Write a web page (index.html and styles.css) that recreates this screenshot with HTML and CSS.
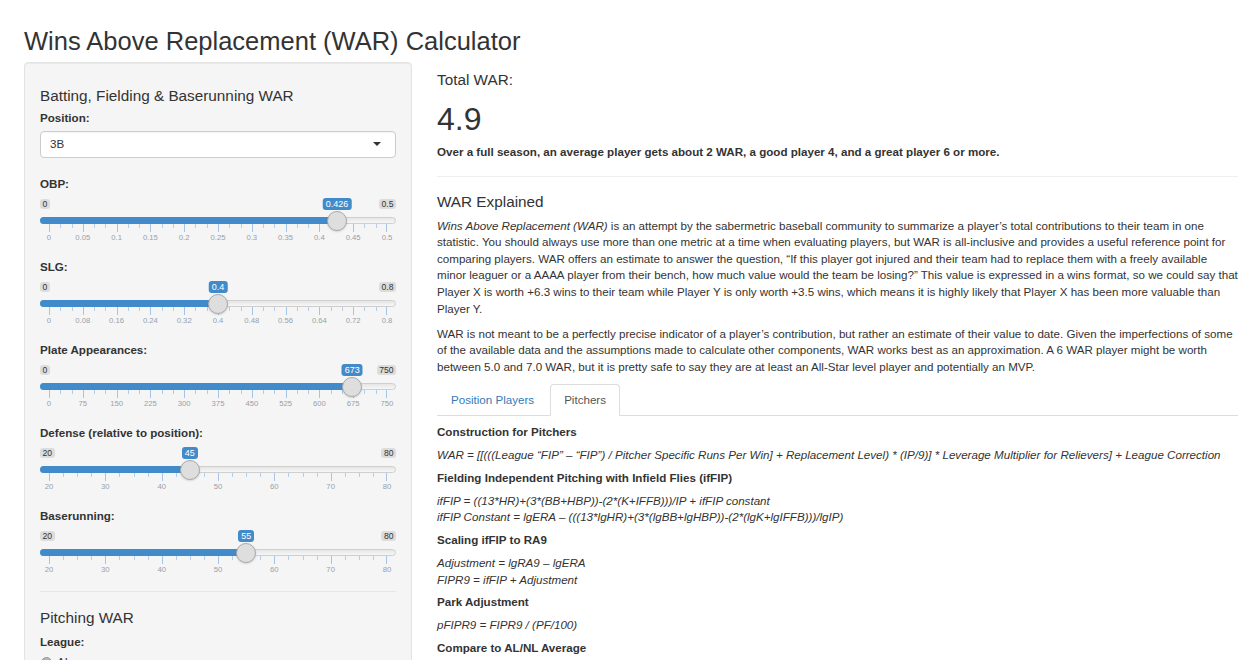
FILE: index.html
```html
<!DOCTYPE html>
<html lang="en">
<head>
<meta charset="utf-8">
<title>Wins Above Replacement (WAR) Calculator</title>
<link rel="stylesheet" href="styles.css">
</head>
<body>
<div class="page">
  <h2 class="title">Wins Above Replacement (WAR) Calculator</h2>
  <div class="layout">
    <div class="sidebar">
      <div class="well">
        <h4 class="sub">Batting, Fielding &amp; Baserunning WAR</h4>
        <div class="form-group select-group">
          <label class="control-label">Position:</label>
          <div class="select"><span>3B</span><span class="caret"></span></div>
        </div>

        <div class="form-group slider-group">
          <label class="control-label">OBP:</label>
          <div class="irs" style="--p: 0.852">
            <div class="irs-labels"><span class="irs-min">0</span><span class="irs-max">0.5</span><span class="irs-single">0.426</span></div>
            <div class="irs-line"><div class="irs-bar"></div><span class="irs-handle"></span></div>
            <div class="irs-grid ten"></div>
            <div class="irs-grid-text"><span>0</span><span>0.05</span><span>0.1</span><span>0.15</span><span>0.2</span><span>0.25</span><span>0.3</span><span>0.35</span><span>0.4</span><span>0.45</span><span>0.5</span></div>
          </div>
        </div>

        <div class="form-group slider-group">
          <label class="control-label">SLG:</label>
          <div class="irs" style="--p: 0.5">
            <div class="irs-labels"><span class="irs-min">0</span><span class="irs-max">0.8</span><span class="irs-single">0.4</span></div>
            <div class="irs-line"><div class="irs-bar"></div><span class="irs-handle"></span></div>
            <div class="irs-grid ten"></div>
            <div class="irs-grid-text"><span>0</span><span>0.08</span><span>0.16</span><span>0.24</span><span>0.32</span><span>0.4</span><span>0.48</span><span>0.56</span><span>0.64</span><span>0.72</span><span>0.8</span></div>
          </div>
        </div>

        <div class="form-group slider-group">
          <label class="control-label">Plate Appearances:</label>
          <div class="irs" style="--p: 0.8973">
            <div class="irs-labels"><span class="irs-min">0</span><span class="irs-max">750</span><span class="irs-single">673</span></div>
            <div class="irs-line"><div class="irs-bar"></div><span class="irs-handle"></span></div>
            <div class="irs-grid ten"></div>
            <div class="irs-grid-text"><span>0</span><span>75</span><span>150</span><span>225</span><span>300</span><span>375</span><span>450</span><span>525</span><span>600</span><span>675</span><span>750</span></div>
          </div>
        </div>

        <div class="form-group slider-group">
          <label class="control-label">Defense (relative to position):</label>
          <div class="irs" style="--p: 0.41667">
            <div class="irs-labels"><span class="irs-min">20</span><span class="irs-max">80</span><span class="irs-single">45</span></div>
            <div class="irs-line"><div class="irs-bar"></div><span class="irs-handle"></span></div>
            <div class="irs-grid six"></div>
            <div class="irs-grid-text"><span>20</span><span>30</span><span>40</span><span>50</span><span>60</span><span>70</span><span>80</span></div>
          </div>
        </div>

        <div class="form-group slider-group">
          <label class="control-label">Baserunning:</label>
          <div class="irs" style="--p: 0.58333">
            <div class="irs-labels"><span class="irs-min">20</span><span class="irs-max">80</span><span class="irs-single">55</span></div>
            <div class="irs-line"><div class="irs-bar"></div><span class="irs-handle"></span></div>
            <div class="irs-grid six"></div>
            <div class="irs-grid-text"><span>20</span><span>30</span><span>40</span><span>50</span><span>60</span><span>70</span><span>80</span></div>
          </div>
        </div>

        <hr class="well-hr">
        <h4 class="sub pitching">Pitching WAR</h4>
        <div class="form-group">
          <label class="control-label">League:</label>
          <div class="radio"><span class="radio-dot"></span><span>AL</span></div>
          <div class="radio"><span class="radio-dot"></span><span>NL</span></div>
        </div>
      </div>
    </div>

    <div class="main">
      <h4 class="total-label">Total WAR:</h4>
      <h1 class="total-value">4.9</h1>
      <p class="note"><strong>Over a full season, an average player gets about 2 WAR, a good player 4, and a great player 6 or more.</strong></p>
      <hr class="main-hr">
      <h4 class="explained">WAR Explained</h4>
      <p class="para"><em>Wins Above Replacement (WAR)</em> is an attempt by the sabermetric baseball community to summarize a player’s total contributions to their team in one statistic. You should always use more than one metric at a time when evaluating players, but WAR is all-inclusive and provides a useful reference point for comparing players. WAR offers an estimate to answer the question, “If this player got injured and their team had to replace them with a freely available minor leaguer or a AAAA player from their bench, how much value would the team be losing?” This value is expressed in a wins format, so we could say that Player X is worth +6.3 wins to their team while Player Y is only worth +3.5 wins, which means it is highly likely that Player X has been more valuable than Player Y.</p>
      <p class="para last">WAR is not meant to be a perfectly precise indicator of a player’s contribution, but rather an estimate of their value to date. Given the imperfections of some of the available data and the assumptions made to calculate other components, WAR works best as an approximation. A 6 WAR player might be worth between 5.0 and 7.0 WAR, but it is pretty safe to say they are at least an All-Star level player and potentially an MVP.</p>

      <div class="tabs">
        <span class="tab">Position Players</span>
        <span class="tab active">Pitchers</span>
      </div>
      <div class="tab-content">
        <p class="tp"><strong>Construction for Pitchers</strong></p>
        <p class="tp"><em>WAR = [[(((League “FIP” – “FIP”) / Pitcher Specific Runs Per Win] + Replacement Level) * (IP/9)] * Leverage Multiplier for Relievers] + League Correction</em></p>
        <p class="tp"><strong>Fielding Independent Pitching with Infield Flies (ifFIP)</strong></p>
        <p class="tp"><em>ifFIP = ((13*HR)+(3*(BB+HBP))-(2*(K+IFFB)))/IP + ifFIP constant<br>ifFIP Constant = lgERA – (((13*lgHR)+(3*(lgBB+lgHBP))-(2*(lgK+lgIFFB)))/lgIP)</em></p>
        <p class="tp"><strong>Scaling ifFIP to RA9</strong></p>
        <p class="tp"><em>Adjustment = lgRA9 – lgERA<br>FIPR9 = ifFIP + Adjustment</em></p>
        <p class="tp"><strong>Park Adjustment</strong></p>
        <p class="tp"><em>pFIPR9 = FIPR9 / (PF/100)</em></p>
        <p class="tp"><strong>Compare to AL/NL Average</strong></p>
      </div>
    </div>
  </div>
</div>
</body>
</html>
```
FILE: styles.css
```css
* { box-sizing: border-box; }
html, body { margin: 0; padding: 0; }
body {
  width: 1238px;
  height: 660px;
  overflow: hidden;
  background: #fff;
  color: #333;
  font-family: "Liberation Sans", Arial, Helvetica, sans-serif;
  font-size: 11.6px;
  line-height: 16.6px;
}
.page { padding-left: 24px; }
.title {
  margin: 0;
  padding-top: 27px;
  margin-bottom: 7px;
  font-size: 25.5px;
  line-height: 28px;
  font-weight: 400;
  color: #333;
}
.layout { display: flex; gap: 25px; align-items: flex-start; }
.sidebar { width: 388px; flex: none; }
.main { width: 801px; flex: none; }

.well {
  background: #f5f5f5;
  border: 1px solid #e3e3e3;
  border-radius: 4px;
  box-shadow: inset 0 1px 1px rgba(0,0,0,0.05);
  padding: 15px 15px 20px;
  min-height: 640px;
}
.sub {
  margin: 9px 0 6px;
  font-size: 15.3px;
  line-height: 17px;
  font-weight: 400;
}
.control-label {
  display: block;
  font-weight: 700;
  margin-bottom: 4px;
}
.form-group { margin-bottom: 16px; }
.select-group { margin-bottom: 18px; }
.select {
  height: 27px;
  background: #fff;
  border: 1px solid #ccc;
  border-radius: 4px;
  padding: 0 14px 0 9px;
  display: flex;
  align-items: center;
  justify-content: space-between;
  box-shadow: inset 0 1px 1px rgba(0,0,0,0.04);
}
.caret {
  width: 0; height: 0;
  border-left: 4px solid transparent;
  border-right: 4px solid transparent;
  border-top: 4.5px solid #333;
}

/* sliders */
.slider-group { margin-bottom: 14.4px; }
.slider-group .control-label { margin-bottom: 5px; }
.irs { --tc: #a6c5e6; --tc2: #b5cde6; }
.irs-labels {
  position: relative;
  height: 20px;
  padding-top: 2px;
  display: flex;
  justify-content: space-between;
  align-items: flex-start;
}
.irs-min, .irs-max {
  font-size: 8.6px;
  line-height: 10px;
  padding: 0 2.5px;
  background: #dcdcdc;
  border-radius: 3px;
  color: #333;
}
.irs-single {
  position: absolute;
  top: 0.5px;
  left: calc(9px + (100% - 18px) * var(--p));
  transform: translateX(-50%);
  font-size: 9px;
  line-height: 12px;
  padding: 0 3px;
  background: #428bca;
  color: #fff;
  border-radius: 3px;
  white-space: nowrap;
}
.irs-line {
  position: relative;
  height: 7px;
  border: 1px solid #cfcfcf;
  border-radius: 8px;
  background: linear-gradient(to bottom, #dddddd -50%, #ffffff 150%);
}
.irs-bar {
  margin: -1px 0 0 -1px;
  height: 7px;
  width: calc(9px + (100% - 16px) * var(--p));
  background: #428bca;
  border-radius: 8px 0 0 8px;
}
.irs-handle {
  position: absolute;
  top: 50%;
  left: calc(8px + (100% - 16px) * var(--p));
  width: 20px;
  height: 20px;
  transform: translate(-50%, -50%);
  border-radius: 50%;
  background: #dedede;
  border: 1px solid #aaaaaa;
  box-shadow: 0 1px 2px rgba(0,0,0,0.15);
}
.irs-grid {
  height: 8px;
  margin: 0 9px;
}
.irs-grid.ten {
  background:
    linear-gradient(var(--tc), var(--tc)) right top / 1px 8px no-repeat,
    repeating-linear-gradient(to right, var(--tc) 0 1px, transparent 1px 10%) left top / 100% 8px no-repeat,
    repeating-linear-gradient(to right, var(--tc2) 0 1px, transparent 1px 3.33333%) left top / 100% 4px no-repeat;
}
.irs-grid.six {
  background:
    linear-gradient(var(--tc), var(--tc)) right top / 1px 8px no-repeat,
    repeating-linear-gradient(to right, var(--tc) 0 1px, transparent 1px 16.66667%) left top / 100% 8px no-repeat,
    repeating-linear-gradient(to right, var(--tc2) 0 1px, transparent 1px 4.16667%) left top / 100% 4px no-repeat;
}
.irs-grid-text {
  display: flex;
  justify-content: space-between;
  margin: 0 9px;
  height: 12px;
  font-size: 7.7px;
  line-height: 12px;
  color: #97a1ab;
}
.irs-grid-text span {
  width: 0;
  display: flex;
  justify-content: center;
  white-space: nowrap;
}

.well-hr {
  margin: 7.5px 0 17px;
  border: 0;
  border-top: 1px solid #e6e6e6;
}
.sub.pitching { margin-top: 0; margin-bottom: 8px; }
.radio {
  display: flex;
  align-items: center;
  gap: 5px;
  margin-top: 4px;
  padding-left: 1px;
}
.radio-dot {
  width: 11px;
  height: 11px;
  border-radius: 50%;
  background: #b5b5b5;
  border: 1px solid #999;
}

/* main */
.total-label {
  margin: 9px 0 0;
  font-size: 15.3px;
  line-height: 17px;
  font-weight: 400;
}
.total-value {
  margin: 14px 0 7px;
  font-size: 32px;
  line-height: 35px;
  font-weight: 400;
}
.note { margin: 0 0 15px; }
.main-hr {
  margin: 0 0 16px;
  border: 0;
  border-top: 1px solid #eee;
}
.explained {
  margin: 0 0 8px;
  font-size: 15.3px;
  line-height: 17px;
  font-weight: 400;
}
.para { margin: 0 0 8.4px; }
.para.last { margin-bottom: 8.5px; }
.tabs {
  display: flex;
  border-bottom: 1px solid #ddd;
  margin-bottom: 8px;
}
.tab {
  padding: 7px 13px;
  margin-right: 2px;
  margin-bottom: -1px;
  border: 1px solid transparent;
  border-radius: 4px 4px 0 0;
  color: #337ab7;
  line-height: 16.6px;
}
.tab.active {
  color: #555;
  background: #fff;
  border-color: #ddd;
  border-bottom-color: #fff;
}
.tp { margin: 0 0 6.2px; }
```
